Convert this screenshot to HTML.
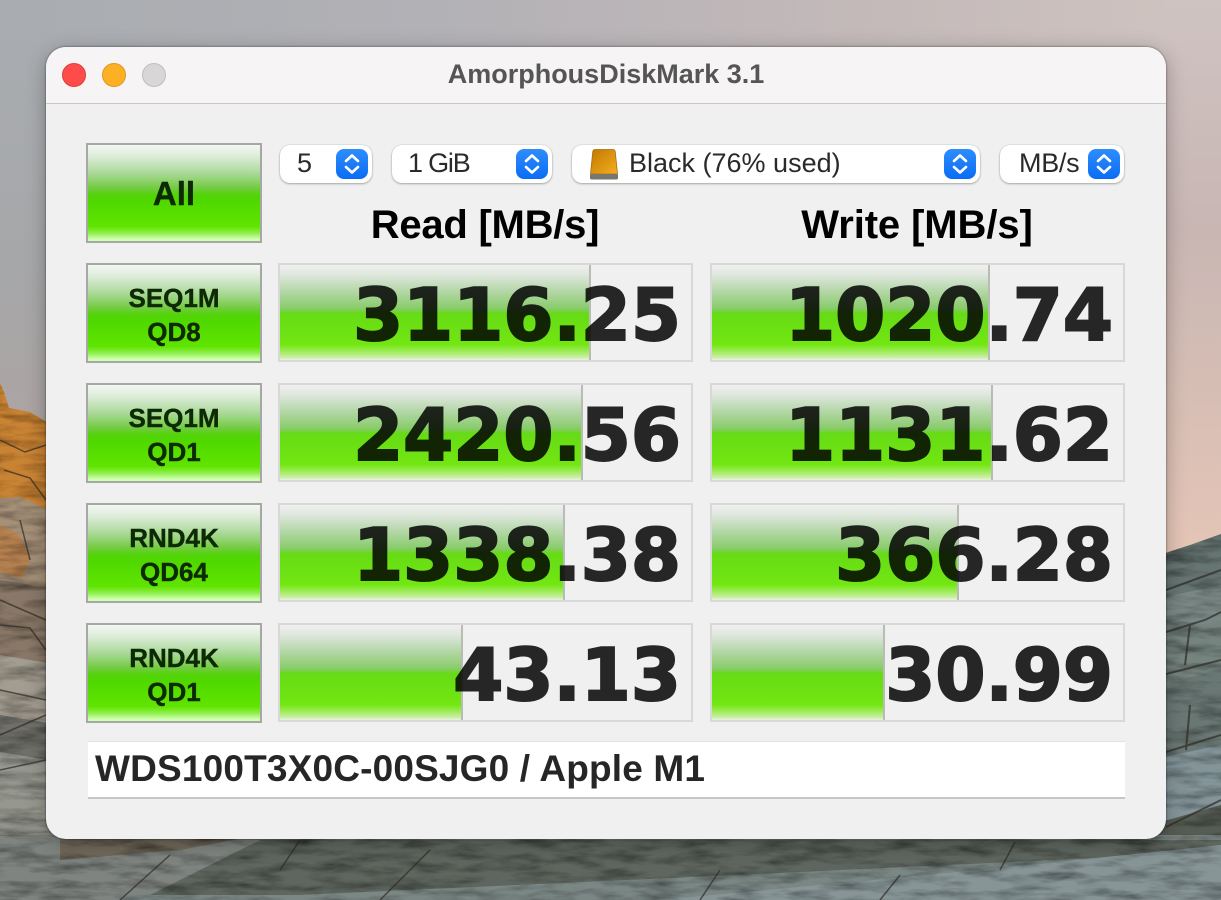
<!DOCTYPE html>
<html><head><meta charset="utf-8"><title>AmorphousDiskMark 3.1</title>
<style>
html,body{margin:0;padding:0;width:1221px;height:900px;overflow:hidden;background:#b5b3b5}
*{box-sizing:border-box}
#bg{position:absolute;left:0;top:0}
.win{position:absolute;left:46px;top:47px;width:1120px;height:792px;border-radius:20px;background:#f0f0f0;overflow:hidden;box-shadow:0 0 2px rgba(0,0,0,.55),0 4px 20px rgba(0,0,0,.28)}
.a{position:absolute;white-space:nowrap;font-family:"Liberation Sans",sans-serif}
.titlebar{left:0;top:0;width:1120px;height:57px;background:#f6f4f5;border-bottom:1px solid #c9c9c9}
.title{left:0;top:11px;width:1120px;text-align:center;font-size:27px;font-weight:bold;color:#555;line-height:32px}
.dot{position:absolute;width:24px;height:24px;border-radius:50%}
.btn{position:absolute;left:40px;width:176px;height:100px;border:2px solid #a5a8a5;text-align:center;color:#0d2a05;-webkit-text-stroke:.4px #0d2a05;font:bold 26px/34px "Liberation Sans",sans-serif;padding-top:3px;background:linear-gradient(#f4f8f4 0,#dcecd8 12%,#a8d896 30%,#72cb40 45%,#52d308 52%,#4fd800 58%,#60e400 85%,#90f050 92%,#d0ffb0 98%);display:flex;flex-direction:column;justify-content:center}
.sel{position:absolute;top:98px;height:38px;background:#fff;border-radius:10px;box-shadow:0 0 1px rgba(0,0,0,.3),0 1px 2px rgba(0,0,0,.28);font:27px/36px "Liberation Sans",sans-serif;color:#2a2a2a;white-space:nowrap}
.st{position:absolute;top:4px;width:32px;height:30px;border-radius:8px;background:linear-gradient(#2f8dfb,#0a6cf5)}
.st svg{position:absolute;left:0;top:0}
.hd{position:absolute;top:156px;width:414px;text-align:center;font:bold 40px/44px "Liberation Sans",sans-serif;color:#000;letter-spacing:-.1px}
.cell{position:absolute;width:415px;height:99px;border:2px solid #d8d8d8;overflow:hidden;background:#f0f0f0}
.num{position:absolute;right:10px;top:1px;font:bold 72px/98px "DejaVu Sans",sans-serif;color:#262626;-webkit-text-stroke:2px #262626;white-space:nowrap}
.bar{position:absolute;left:0;top:0;height:95px;border-right:2px solid #c4c8c0;mix-blend-mode:multiply;background:linear-gradient(#ffffff 0,#eef6ec 10%,#c8e8be 24%,#90d870 46%,#6ce916 51%,#7af613 84%,#a8fa60 91%,#ddffb9 98%,#ffffff 100%)}
.field{position:absolute;left:42px;top:694px;width:1037px;height:58px;background:#fff;border-top:1px solid #e2e2e2;border-bottom:2px solid #c6c6c6;font:bold 37px/54px "Liberation Sans",sans-serif;letter-spacing:.17px;color:#262626;padding-left:7px;white-space:nowrap}
</style></head><body>
<svg id="bg" width="1221" height="900" viewBox="0 0 1221 900" xmlns="http://www.w3.org/2000/svg">
<defs>
<linearGradient id="sky" x1="0" y1="0" x2="1" y2="0"><stop offset="0" stop-color="#a8acb0"/><stop offset=".35" stop-color="#b2b1b6"/><stop offset=".7" stop-color="#c3b9b9"/><stop offset="1" stop-color="#d0c4c0"/></linearGradient>
<linearGradient id="skyr" x1="0" y1="0" x2="0" y2="1"><stop offset="0" stop-color="#cfc3c1"/><stop offset=".4" stop-color="#c8b6b3"/><stop offset="1" stop-color="#e6c6b6"/></linearGradient>
<linearGradient id="skyl" x1="0" y1="0" x2="0" y2="1"><stop offset="0" stop-color="#a9adb1"/><stop offset=".6" stop-color="#a6a7a9"/><stop offset="1" stop-color="#aca4a2"/></linearGradient>
<filter id="tex" x="0" y="0" width="100%" height="100%"><feTurbulence type="fractalNoise" baseFrequency=".025 .11" numOctaves="4" seed="7"/><feColorMatrix values="0 0 0 0 0 0 0 0 0 0 0 0 0 0 0 1.4 0 0 0 -.55"/><feComposite in2="SourceAlpha" operator="in" result="n"/><feMerge><feMergeNode in="SourceGraphic"/><feMergeNode in="n"/></feMerge></filter>
</defs>
<rect width="1221" height="900" fill="url(#sky)"/>
<rect x="0" y="0" width="46" height="440" fill="url(#skyl)"/>
<rect x="1166" y="0" width="55" height="570" fill="url(#skyr)"/>
<g filter="url(#tex)">
<path d="M0 500H60V900H0Z" fill="#83817a"/>
<path d="M0 383L4 392L9 408L30 412L60 430V520H0Z" fill="#c98336"/>
<path d="M0 498L20 497L60 515V590L0 580Z" fill="#a59078"/>
<path d="M0 525L20 535L30 560L22 578L0 572Z" fill="#bb8552"/>
<path d="M0 580L60 590V665L0 655Z" fill="#897868"/>
<path d="M0 655L60 665V725L0 715Z" fill="#a39c90"/>
<path d="M0 715L60 725V762L0 752Z" fill="#6f7069"/>
<path d="M0 752L60 762V840H0Z" fill="#96988f"/>
<path d="M1150 558L1190 545L1221 534V900H1150Z" fill="#667572"/>
<path d="M1150 600L1221 585V625L1150 640Z" fill="#7a8885"/>
<path d="M1150 640L1221 620V670L1150 690Z" fill="#76847f"/>
<path d="M1150 690L1221 668V745L1150 760Z" fill="#6a7875"/>
<path d="M1150 760L1221 745V820L1150 825Z" fill="#84959a"/>
<path d="M1150 825L1221 805V850L1150 880Z" fill="#555b52"/>
<path d="M0 835H1221V900H0Z" fill="#7a8784"/>
<path d="M0 835H500L300 860L110 900H0Z" fill="#7f8480"/>
<path d="M60 835H260L180 850L60 860Z" fill="#6f675a"/>
<path d="M260 840H1221V852L800 872L300 895H150Z" fill="#5f665f"/>
<path d="M660 900L1000 868L1221 845V900Z" fill="#879597"/>
</g>
<g fill="none" stroke="#2e2a24" stroke-opacity=".7">
<path d="M0 440L25 452L46 445M4 470L30 478L46 500M20 520L30 560M0 600L46 620M0 625L30 628L46 650M0 690L46 700M0 735L46 715M0 770L46 760" stroke-width="1.500"/>
<path d="M1166 590L1221 570M1166 632L1205 620L1221 612M1190 625L1185 665M1166 674L1221 660M1190 705L1186 750M1166 752L1221 735M1166 827L1221 800" stroke-width="2"/>
<path d="M120 900L170 855M280 870L300 840M380 900L430 850M720 870L700 900M900 875L880 900M1000 870L1015 842" stroke-width="1.500"/>
</g>
</svg>
<div class="win">
<div class="a titlebar"></div>
<div class="a title">AmorphousDiskMark 3.1</div>
<div class="dot" style="left:16px;top:16px;background:#fe4c4a;border:1px solid #dd3d39"></div>
<div class="dot" style="left:56px;top:16px;background:#feb025;border:1px solid #dc9820"></div>
<div class="dot" style="left:96px;top:16px;background:#d8d6d7;border:1px solid #bfbdbe"></div>

<div class="btn" style="top:96px;font-size:33px;line-height:36px;padding-top:2px">All</div>
<div class="btn" style="top:216px"><div>SEQ1M</div><div>QD8</div></div>
<div class="btn" style="top:336px"><div>SEQ1M</div><div>QD1</div></div>
<div class="btn" style="top:456px"><div>RND4K</div><div>QD64</div></div>
<div class="btn" style="top:576px"><div>RND4K</div><div>QD1</div></div>

<div class="sel" style="left:234px;width:92px"><span class="a" style="left:17px;top:0">5</span><div class="st" style="left:56px"><svg width="32" height="30" fill="none" stroke="#fff" stroke-width="2.6" stroke-linecap="round" stroke-linejoin="round"><path d="M10 12L16 6.500L22 12M10 18L16 23.500L22 18"/></svg></div></div>
<div class="sel" style="left:346px;width:160px"><span class="a" style="left:16px;top:0;letter-spacing:-1.200px">1 GiB</span><div class="st" style="left:124px"><svg width="32" height="30" fill="none" stroke="#fff" stroke-width="2.6" stroke-linecap="round" stroke-linejoin="round"><path d="M10 12L16 6.500L22 12M10 18L16 23.500L22 18"/></svg></div></div>
<div class="sel" style="left:526px;width:408px">
<svg style="position:absolute;left:17px;top:4px" width="30" height="32"><defs><linearGradient id="dr" x1="0" y1="0" x2="1" y2="1"><stop offset="0" stop-color="#c07800"/><stop offset="1" stop-color="#f5ae20"/></linearGradient></defs><path d="M6 0.500H24Q26 0.500 26.300 3L28.500 25H1.500L3.700 3Q4 0.500 6 0.500Z" fill="url(#dr)" stroke="#a86c10" stroke-width=".8"/><rect x="1" y="25" width="28" height="5.500" rx="1.500" fill="#77776f"/></svg>
<span class="a" style="left:57px;top:0">Black (76% used)</span><div class="st" style="left:372px"><svg width="32" height="30" fill="none" stroke="#fff" stroke-width="2.6" stroke-linecap="round" stroke-linejoin="round"><path d="M10 12L16 6.500L22 12M10 18L16 23.500L22 18"/></svg></div></div>
<div class="sel" style="left:954px;width:124px"><span class="a" style="left:19px;top:0;letter-spacing:-.3px">MB/s</span><div class="st" style="left:88px"><svg width="32" height="30" fill="none" stroke="#fff" stroke-width="2.6" stroke-linecap="round" stroke-linejoin="round"><path d="M10 12L16 6.500L22 12M10 18L16 23.500L22 18"/></svg></div></div>

<div class="hd" style="left:232px;letter-spacing:-.25px">Read [MB/s]</div>
<div class="hd" style="left:664px">Write [MB/s]</div>

<div class="cell" style="left:232px;top:216px"><div class="num">3116.25</div><div class="bar" style="width:311px"></div></div>
<div class="cell" style="left:664px;top:216px"><div class="num">1020.74</div><div class="bar" style="width:278px"></div></div>
<div class="cell" style="left:232px;top:336px"><div class="num">2420.56</div><div class="bar" style="width:303px"></div></div>
<div class="cell" style="left:664px;top:336px"><div class="num">1131.62</div><div class="bar" style="width:281px"></div></div>
<div class="cell" style="left:232px;top:456px"><div class="num">1338.38</div><div class="bar" style="width:285px"></div></div>
<div class="cell" style="left:664px;top:456px"><div class="num">366.28</div><div class="bar" style="width:247px"></div></div>
<div class="cell" style="left:232px;top:576px"><div class="num">43.13</div><div class="bar" style="width:183px"></div></div>
<div class="cell" style="left:664px;top:576px"><div class="num">30.99</div><div class="bar" style="width:173px"></div></div>

<div class="field">WDS100T3X0C-00SJG0 / Apple M1</div>
</div>
</body></html>
